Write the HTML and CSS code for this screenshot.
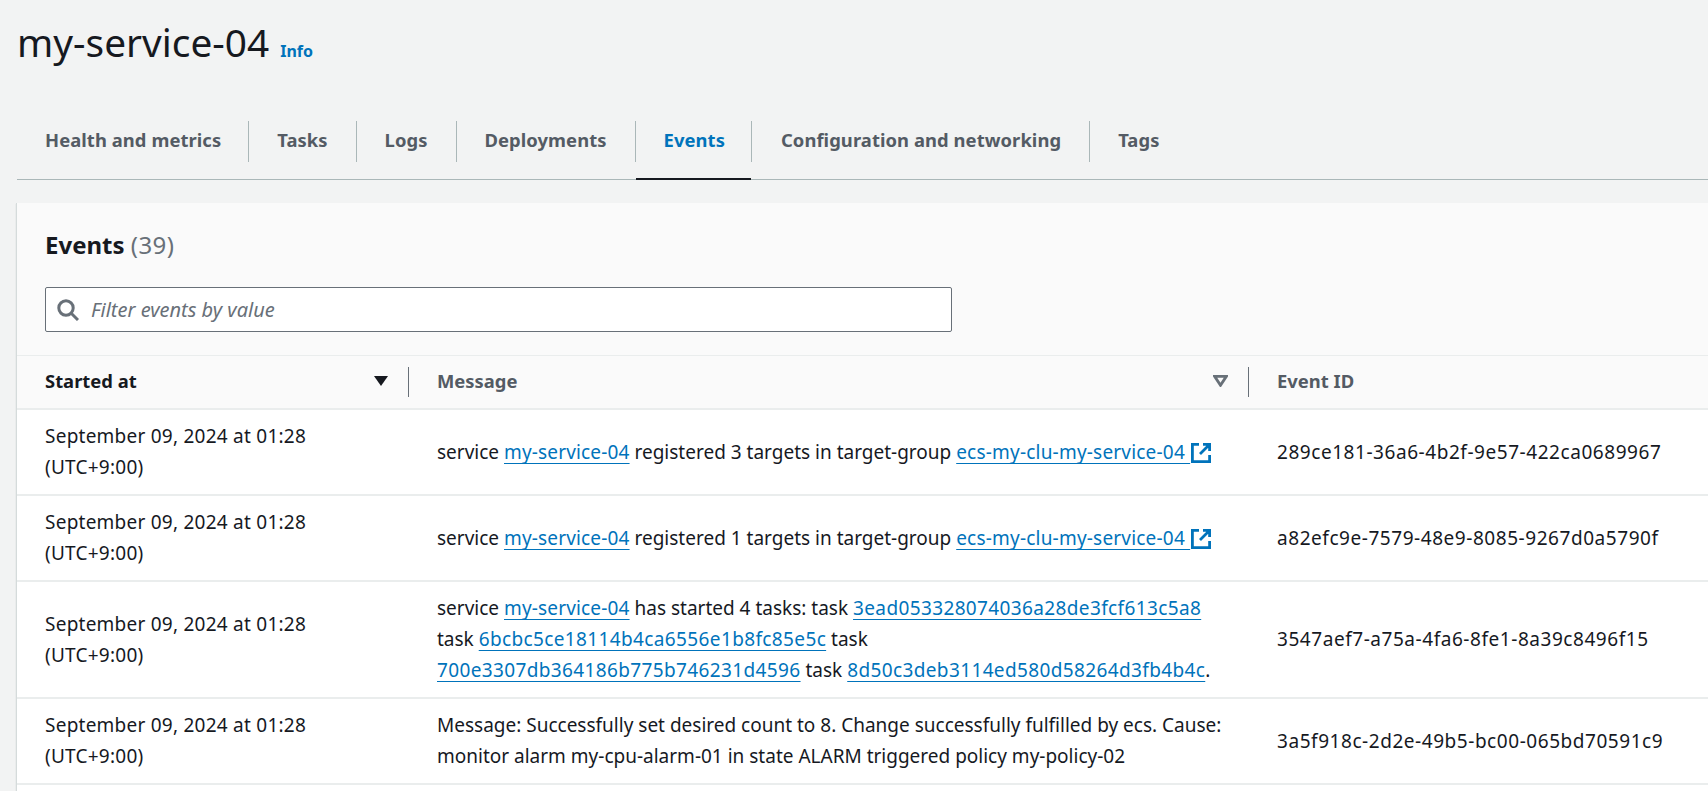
FILE: index.html
```html
<!DOCTYPE html>
<html lang="en">
<head>
<meta charset="utf-8">
<title>my-service-04</title>
<link rel="stylesheet" href="styles.css">
</head>
<body>
<header class="page-head">
  <h1 class="title">my-service-04</h1>
  <a class="info" href="#">Info</a>
</header>
<nav class="tabs">
  <a class="tab" href="#">Health and metrics</a>
  <a class="tab" href="#">Tasks</a>
  <a class="tab" href="#">Logs</a>
  <a class="tab" href="#">Deployments</a>
  <a class="tab active" href="#">Events</a>
  <a class="tab after-active" href="#">Configuration and networking</a>
  <a class="tab" href="#">Tags</a>
</nav>
<section class="panel">
  <div class="panel-head">
    <h2 class="panel-title">Events <span class="count">(39)</span></h2>
    <label class="filter">
      <svg class="search" viewBox="0 0 22 22" width="22" height="22"><circle cx="9" cy="9" r="7.2"/><path d="M14.2 14.2 21 21"/></svg>
      <span class="placeholder">Filter events by value</span>
    </label>
  </div>
  <div class="row head">
    <div class="th strong"><span>Started at</span><svg class="caret" viewBox="0 0 16 12" width="16" height="12"><path d="M1 1h14L8 11z"/></svg></div>
    <div class="th sortable"><span>Message</span><svg class="caret hollow" viewBox="0 0 14 11" width="15" height="12"><path d="M1.5 1.2h11L7 9.5z"/></svg></div>
    <div class="th last"><span>Event ID</span></div>
  </div>
  <div class="row">
    <div class="td date">September 09, 2024 at 01:28 (UTC+9:00)</div>
    <div class="td msg">service <a href="#">my-service-04</a> registered 3 targets in target-group <a class="ext" href="#">ecs-my-clu-my-service-04 </a><svg class="ext-icon" viewBox="0 0 20 20" width="20" height="20"><path d="M8 1.4H1.4v17.2h17.2V12M12 1.4h6.6V8M18 2 9 11"/></svg></div>
    <div class="td uid">289ce181-36a6-4b2f-9e57-422ca0689967</div>
  </div>
  <div class="row">
    <div class="td date">September 09, 2024 at 01:28 (UTC+9:00)</div>
    <div class="td msg">service <a href="#">my-service-04</a> registered 1 targets in target-group <a class="ext" href="#">ecs-my-clu-my-service-04 </a><svg class="ext-icon" viewBox="0 0 20 20" width="20" height="20"><path d="M8 1.4H1.4v17.2h17.2V12M12 1.4h6.6V8M18 2 9 11"/></svg></div>
    <div class="td uid">a82efc9e-7579-48e9-8085-9267d0a5790f</div>
  </div>
  <div class="row">
    <div class="td date">September 09, 2024 at 01:28 (UTC+9:00)</div>
    <div class="td msg">service <a href="#">my-service-04</a> has started 4 tasks: task <a class="hex" href="#">3ead053328074036a28de3fcf613c5a8</a> task <a class="hex" href="#">6bcbc5ce18114b4ca6556e1b8fc85e5c</a> task <a class="hex" href="#">700e3307db364186b775b746231d4596</a> task <a class="hex" href="#">8d50c3deb3114ed580d58264d3fb4b4c</a>.</div>
    <div class="td uid">3547aef7-a75a-4fa6-8fe1-8a39c8496f15</div>
  </div>
  <div class="row">
    <div class="td date">September 09, 2024 at 01:28 (UTC+9:00)</div>
    <div class="td msg">Message: Successfully set desired count to 8. Change successfully fulfilled by ecs. Cause: monitor alarm my-cpu-alarm-01 in state ALARM triggered policy my-policy-02</div>
    <div class="td uid">3a5f918c-2d2e-49b5-bc00-065bd70591c9</div>
  </div>
</section>
</body>
</html>
```
FILE: styles.css
```css
* { box-sizing: border-box; }
html, body { height: 100%; }
body {
  margin: 0;
  overflow: hidden;
  background: #f2f3f3;
  color: #16191f;
  font-family: "Noto Sans", Roboto, sans-serif;
  font-size: 19px;
  padding-left: 17px;
}
a { color: #0073bb; text-decoration: none; }
.page-head { display: flex; align-items: baseline; gap: 11px; height: 121px; padding-top: 17px; }
.title { margin: 0; font-size: 38.8px; font-weight: 400; line-height: 50px; }
.info { font-size: 16px; font-weight: 700; }
.tabs { display: flex; height: 59px; border-bottom: 1px solid #aab7b8; }
.tab {
  height: 41px;
  padding: 0 28px;
  border-right: 1px solid #aab7b8;
  color: #545b64;
  font-size: 18.4px;
  font-weight: 700;
  letter-spacing: .07px;
  line-height: 38px;
  position: relative;
}
.tab:first-child { padding-right: 27px; }
.tab:last-child { border-right: 0; }
.tab.active { color: #0073bb; padding: 0 26px 0 28px; }
.tab.after-active { padding-left: 29px; }
.tab.active::after {
  content: "";
  position: absolute;
  left: 0;
  right: 0;
  top: 57px;
  height: 2px;
  background: #16191f;
}
.panel {
  margin: 23px 0 0 -1px;
  background: #fff;
  border-left: 1px solid #d5dbdb;
  box-shadow: 0 1px 1px rgba(0, 28, 36, .2);
  min-height: 600px;
}
.panel-head { height: 152px; padding: 26px 28px 0; background: #fafafa; }
.panel-title { margin: 0; font-size: 24px; line-height: 32px; font-weight: 700; }
.count { color: #687078; font-weight: 400; letter-spacing: .4px; }
.filter {
  display: flex;
  align-items: center;
  gap: 12px;
  width: 907px;
  height: 45px;
  margin-top: 26px;
  padding-left: 11px;
  background: #fff;
  border: 1px solid #687078;
  border-radius: 2px;
}
.search { fill: none; stroke: #687078; stroke-width: 3; }
.placeholder { color: #687078; font-style: italic; font-size: 20px; }
.row {
  display: grid;
  grid-template-columns: 392px 840px 1fr;
  border-bottom: 2px solid #eaeded;
  min-height: 86px;
  align-items: center;
  line-height: 31px;
}
.row.head {
  min-height: 55px;
  background: #fafafa;
  border-top: 1px solid #eaeded;
}
.th {
  display: flex;
  align-items: center;
  justify-content: space-between;
  height: 30px;
  padding: 0 19px 3px 28px;
  border-right: 1px solid #687078;
  color: #545b64;
  font-size: 18.4px;
  font-weight: 700;
}
.th.sortable { padding-right: 20px; }
.th.strong { color: #16191f; }
.th.last { border-right: 0; }
.caret { fill: #16191f; }
.caret.hollow { fill: none; stroke: #687078; stroke-width: 2.6; }
.td { padding: 11px 28px; }
.date { letter-spacing: .24px; }
.uid { letter-spacing: .55px; }
.msg { padding-right: 23px; }
.msg a {
  text-decoration: underline;
  text-decoration-skip-ink: none;
  text-decoration-thickness: 1px;
  text-underline-offset: 4px;
  letter-spacing: .16px;
}
.msg a.ext { letter-spacing: .2px; }
.msg a.hex { letter-spacing: .37px; }
.ext-icon { margin-left: 1px; vertical-align: -4px; fill: none; stroke: #0073bb; stroke-width: 2.8; }
```
